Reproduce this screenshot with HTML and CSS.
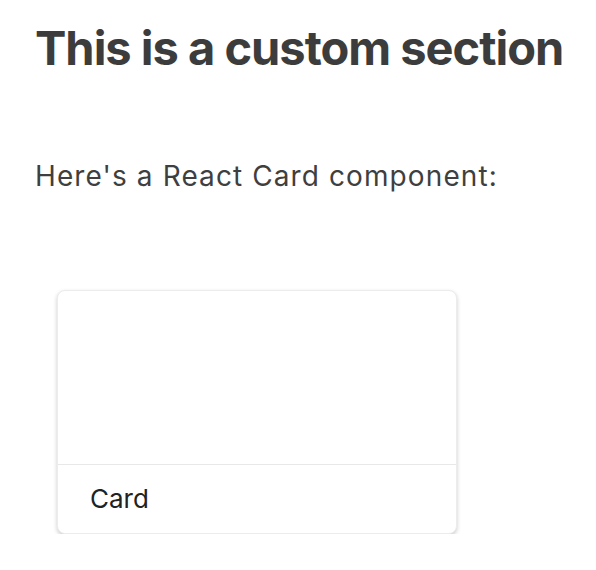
FILE: index.html
```html
<!DOCTYPE html>
<html>
<head>
<meta charset="utf-8">
<link rel="stylesheet" href="styles.css">
</head>
<body>
<div class="page">
  <h1 class="title">This is a custom section</h1>
  <p class="lead">Here's a React Card component:</p>
  <div class="card">
    <div class="card-media"></div>
    <div class="card-body">Card</div>
  </div>
</div>
</body>
</html>
```
FILE: styles.css
```css
html, body { margin: 0; padding: 0; background: #fff; }
.page {
  padding: 21px 0 0 35px;
  font-family: Inter, "Noto Sans", sans-serif;
}
.title {
  margin: 0;
  font-size: 47px;
  font-weight: 700;
  color: #3c3c3c;
  line-height: 54px;
  letter-spacing: -1px;
}
.lead {
  margin: 84px 0 0 0;
  font-size: 28px;
  color: #3f3f3f;
  line-height: 34px;
  letter-spacing: 1.1px;
}
.card {
  margin: 97px 0 0 22px;
  width: 398px;
  border: 1px solid #ececec;
  border-radius: 8px;
  box-shadow: 0 2px 4px rgba(0,0,0,0.2);
  overflow: hidden;
  background: #fff;
}
.card-media { height: 173px; border-bottom: 1px solid #e8e8e8; }
.card-body {
  padding: 17px 32px 17px;
  font-size: 26px;
  color: #222;
  line-height: 34px;
}
```
